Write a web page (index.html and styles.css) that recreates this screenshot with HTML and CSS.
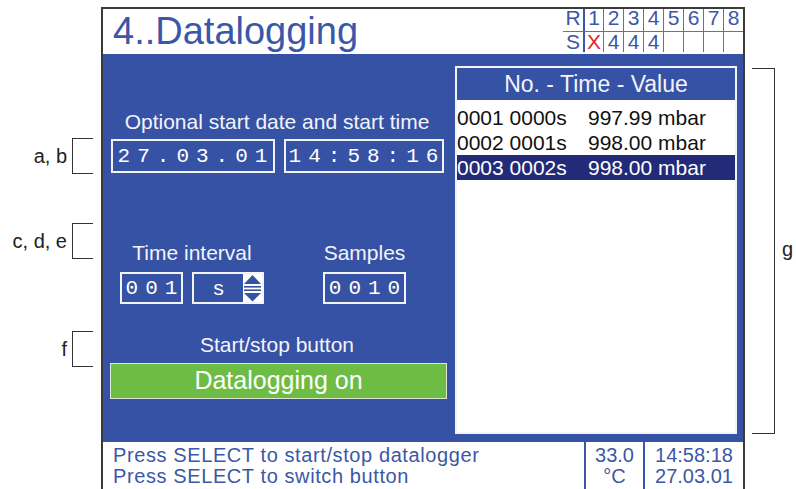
FILE: index.html
```html
<!DOCTYPE html>
<html lang="en">
<head>
    <meta charset="UTF-8">
    <meta name="viewport" content="width=device-width, initial-scale=1.0">
    <title>4..Datalogging</title>
    <link rel="stylesheet" href="styles.css">
</head>
<body>
    <div class="figure">
        <div class="notes-left">
            <div class="note note-ab"><span class="note-label">a, b</span><span class="bracket-left"></span></div>
            <div class="note note-cde"><span class="note-label">c, d, e</span><span class="bracket-left"></span></div>
            <div class="note note-f"><span class="note-label">f</span><span class="bracket-left"></span></div>
        </div>

        <div class="screen">
            <header class="screen-head">
                <h1 class="title">4..Datalogging</h1>
                <div class="slots">
                    <span class="slot top label">R</span>
                    <span class="slot top first">1</span>
                    <span class="slot top">2</span>
                    <span class="slot top">3</span>
                    <span class="slot top">4</span>
                    <span class="slot top">5</span>
                    <span class="slot top">6</span>
                    <span class="slot top">7</span>
                    <span class="slot top">8</span>
                    <span class="slot label">S</span>
                    <span class="slot first cross">X</span>
                    <span class="slot">4</span>
                    <span class="slot">4</span>
                    <span class="slot">4</span>
                    <span class="slot"></span>
                    <span class="slot"></span>
                    <span class="slot"></span>
                    <span class="slot"></span>
                </div>
            </header>

            <main class="screen-body">
                <section class="settings">
                    <p class="caption caption-start">Optional start date and start time</p>
                    <div class="date-row">
                        <span class="field field-date">27.03.01</span>
                        <span class="field field-time">14:58:16</span>
                    </div>

                    <div class="interval-row">
                        <div class="group group-interval">
                            <p class="caption">Time interval</p>
                            <div class="group-fields">
                                <span class="field field-small field-num">001</span>
                                <span class="field field-small field-unit">
                                    <span class="unit-text">s</span>
                                    <span class="spinner">
                                        <svg width="19" height="28" viewBox="0 0 19 28">
                                            <path d="M9.5 1 L18 10 L1 10 Z" fill="#3652a4"/>
                                            <rect x="1" y="12" width="17" height="1.6" fill="#3652a4"/>
                                            <rect x="1" y="15.4" width="17" height="1.6" fill="#3652a4"/>
                                            <path d="M1 19 L18 19 L9.5 27.5 Z" fill="#3652a4"/>
                                        </svg>
                                    </span>
                                </span>
                            </div>
                        </div>
                        <div class="group group-samples">
                            <p class="caption">Samples</p>
                            <div class="group-fields">
                                <span class="field field-small field-samples">0010</span>
                            </div>
                        </div>
                    </div>

                    <p class="caption caption-button">Start/stop button</p>
                    <div class="log-button">Datalogging on</div>
                </section>

                <section class="log">
                    <div class="log-head">No. - Time - Value</div>
                    <ul class="log-rows">
                        <li><span class="log-key">0001 0000s</span>997.99 mbar</li>
                        <li><span class="log-key">0002 0001s</span>998.00 mbar</li>
                        <li class="selected"><span class="log-key">0003 0002s</span>998.00 mbar</li>
                    </ul>
                </section>
            </main>

            <footer class="status">
                <div class="status-text">
                    Press SELECT to start/stop datalogger<br>
                    Press SELECT to switch button
                </div>
                <div class="status-cell status-temp">33.0<br>°C</div>
                <div class="status-cell status-clock">14:58:18<br>27.03.01</div>
            </footer>
        </div>

        <div class="notes-right">
            <span class="bracket-right"></span>
            <span class="note-label">g</span>
        </div>
    </div>
</body>
</html>
```

FILE: styles.css
```css
/* Datalogging screen with callouts */
body {
    margin: 0;
    background-color: #fff;
    font-family: "Liberation Sans", Arial, sans-serif;
    overflow: hidden;
}
p {
    margin: 0;
}
.figure {
    display: flex;
    align-items: flex-start;
    height: 489px;
}

/* callouts */
.notes-left {
    width: 101px;
    padding: 138px 8px 0 0;
    box-sizing: border-box;
    flex-shrink: 0;
}
.note {
    display: flex;
    align-items: center;
    height: 36px;
}
.note-cde {
    margin-top: 49px;
}
.note-f {
    margin-top: 72px;
}
.note-label {
    flex: 1;
    text-align: right;
    padding-right: 5px;
    font-size: 20px;
    color: #222;
}
.bracket-left {
    width: 21px;
    height: 36px;
    box-sizing: border-box;
    border: 1px solid #333;
    border-right: 0;
}
.notes-right {
    display: flex;
    align-items: center;
    margin: 68px 0 0 7px;
}
.bracket-right {
    width: 23px;
    height: 366px;
    box-sizing: border-box;
    border: 1px solid #333;
    border-left: 0;
}
.notes-right .note-label {
    flex: none;
    padding: 0 0 4px 7px;
}

/* screen frame */
.screen {
    width: 640px;
    margin-top: 7px;
    border: 2px solid #3a3a3a;
    border-bottom: 0;
    flex-shrink: 0;
}
.screen-head {
    display: flex;
    justify-content: space-between;
    height: 45px;
    background-color: #fff;
}
.title {
    margin: 0;
    padding-left: 10px;
    font-size: 38px;
    line-height: 45px;
    font-weight: normal;
    color: #3b57a8;
}
.slots {
    display: grid;
    grid-template-columns: repeat(9, 20px);
    grid-template-rows: 23px 20px;
    font-size: 21px;
    color: #3b57a8;
}
.slot {
    box-sizing: border-box;
    text-align: center;
    border-left: 1px solid #5a72b8;
    line-height: 19px;
}
.slot.top {
    border-bottom: 1px solid #5a72b8;
    line-height: 18px;
}
.slot.label {
    border-left: 0;
}
.slot.first {
    border-left: 2px solid #3b57a8;
}
.slot.cross {
    color: #e8222a;
}

/* blue area */
.screen-body {
    display: flex;
    height: 388px;
    padding: 12px 6px 8px 0;
    box-sizing: border-box;
    background-color: #3652a4;
    color: #fff;
}
.settings {
    width: 348px;
    flex-shrink: 0;
}
.caption {
    font-size: 21px;
    line-height: 24px;
    text-align: center;
    color: #f2f4fa;
}
.caption-start {
    margin-top: 44px;
}
.date-row {
    display: flex;
    justify-content: center;
    gap: 9px;
    margin-top: 5px;
}
.field {
    display: flex;
    align-items: center;
    justify-content: center;
    box-sizing: border-box;
    border: 2px solid #f2f4fa;
    font-family: "Liberation Mono", "DejaVu Sans Mono", monospace;
    font-size: 21px;
    letter-spacing: 7px;
    text-indent: 7px;
}
.field-date {
    width: 164px;
    height: 34px;
}
.field-time {
    width: 160px;
    height: 34px;
}
.interval-row {
    display: flex;
    gap: 59px;
    margin-top: 68px;
    padding-left: 17px;
}
.group {
    display: flex;
    flex-direction: column;
}
.group-interval {
    width: 144px;
}
.group-samples {
    width: 83px;
}
.group-fields {
    display: flex;
    gap: 9px;
    margin-top: 7px;
}
.field-small {
    height: 32px;
}
.field-num {
    width: 63px;
}
.field-samples {
    width: 83px;
}
.field-unit {
    width: 72px;
    justify-content: flex-start;
    letter-spacing: 0;
    text-indent: 0;
}
.unit-text {
    flex: 1;
    text-align: center;
    padding-top: 2px;
}
.spinner {
    display: flex;
    width: 19px;
    height: 28px;
    background-color: #fff;
}
.caption-button {
    margin-top: 29px;
}
.log-button {
    width: 337px;
    height: 36px;
    margin: 6px 0 0 7px;
    box-sizing: border-box;
    border: 1px solid #dfe8d6;
    background-color: #6dbd45;
    font-size: 25px;
    line-height: 33px;
    text-align: center;
}

/* log list */
.log {
    display: flex;
    flex-direction: column;
    width: 282px;
    margin-left: 4px;
    box-sizing: border-box;
    border: 2px solid #f2f4fa;
}
.log-head {
    height: 32px;
    font-size: 23px;
    line-height: 32px;
    text-align: center;
    color: #f2f4fa;
}
.log-rows {
    flex: 1;
    list-style-type: none;
    margin: 0;
    padding: 5px 0 0;
    background-color: #fff;
    color: #111;
}
.log-rows li {
    height: 25px;
    font-size: 21px;
    line-height: 25px;
    white-space: nowrap;
}
.log-rows li.selected {
    background-color: #232a78;
    color: #fff;
}
.log-key {
    display: inline-block;
    width: 131px;
}

/* status bar */
.status {
    display: flex;
    height: 47px;
    background-color: #fff;
    color: #3b57a8;
    font-size: 20px;
    line-height: 21px;
}
.status-text {
    flex: 1;
    padding: 3px 0 0 10px;
    letter-spacing: 0.6px;
}
.status-cell {
    box-sizing: border-box;
    padding-top: 3px;
    text-align: center;
    border-left: 2px solid #3b57a8;
}
.status-temp {
    width: 59px;
}
.status-clock {
    width: 100px;
}
```
